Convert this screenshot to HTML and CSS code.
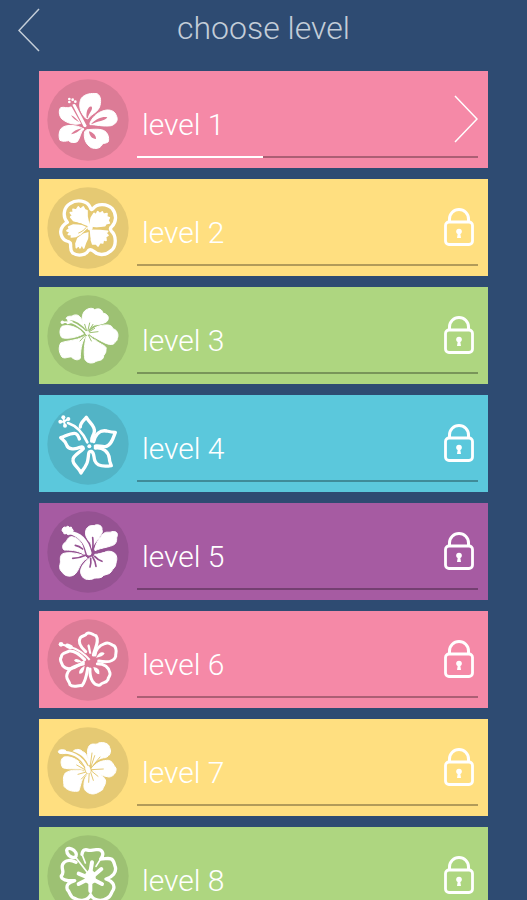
FILE: index.html
```html
<!DOCTYPE html>
<html lang="en">
<head>
    <meta charset="UTF-8">
    <meta name="viewport" content="width=device-width, initial-scale=1.0">
    <title>choose level</title>
    <link rel="stylesheet" href="styles.css">
</head>
<body>
    <svg class="sprite" aria-hidden="true">
        <symbol id="lock" viewBox="0 0 30 38">
            <rect x="1.5" y="14" width="27" height="22.5" rx="3.5" fill="none" stroke="currentColor" stroke-width="2.8"/>
            <path d="M5.500 14v-3a9.500 9.500 0 0 1 19 0v3" fill="none" stroke="currentColor" stroke-width="3"/>
            <circle cx="15" cy="23.5" r="2.8" fill="currentColor"/>
            <path d="M14 24h2l1 6h-4z" fill="currentColor"/>
        </symbol>
    </svg>

    <header class="topbar">
        <a class="back" href="#" aria-label="back">
            <svg width="22" height="44" viewBox="0 0 22 44"><path d="M21 1L1 22.500L21 43"/></svg>
        </a>
        <h1>choose level</h1>
    </header>

    <ul class="levels">
        <li>
            <button class="level pink" type="button">
                <svg class="flower bold" viewBox="21 20 246 246">
                    <circle class="disc" cx="144" cy="143" r="122"/>
                    <path d="M138 138C120 125 114 95 124 78C134 64 155 62 171 64C184 70 184 90 178 106C170 122 152 126 143 140Z"/>
                    <path d="M150 152C160 128 180 116 200 113C216 112 226 120 228 128C236 142 230 154 214 160C190 164 165 156 150 157Z"/>
                    <path d="M140 172C150 172 175 168 190 174C204 180 208 196 205 208C198 214 190 212 187 216C180 230 166 230 154 226C136 216 130 195 134 178Z"/>
                    <path d="M128 168C110 158 75 154 62 170C56 180 56 195 60 204C70 209 78 206 86 205C92 212 104 212 112 208C122 196 120 180 132 170Z"/>
                    <path d="M122 153C105 160 80 152 66 140C56 130 56 112 62 106C72 102 82 110 92 104C106 100 118 130 128 152Z"/>
                    <path class="shade" d="M140 136C137 118 146 98 155 103C160 112 147 120 143 138ZM154 154C168 139 190 131 202 135C196 146 172 146 154 156ZM147 177C160 181 169 190 168 200C156 200 148 190 147 177ZM126 168C110 171 99 177 93 186C106 185 117 176 126 168ZM118 150C110 140 102 132 93 129C98 138 108 144 118 150Z"/>
                    <path class="cut" stroke-width="16" d="M101 98L136 160"/>
                    <path stroke="none" d="M97 97Q104 92 107 98L140 160Q138 167 131 163Z"/>
                    <g stroke="none"><circle cx="88" cy="80" r="4"/><circle cx="98" cy="82" r="4"/><circle cx="88" cy="89" r="4"/><circle cx="106" cy="88" r="4"/></g>
                </svg>
                <span class="name">level 1</span>
                <svg class="mark" width="24" height="48" viewBox="0 0 24 48"><path class="line" d="M1 1L23 24L1 47"/></svg>
                <progress value="37" max="100" aria-label="level 1 progress"></progress>
            </button>
        </li>
        <li>
            <button class="level yellow" type="button" disabled>
                <svg class="flower bold" viewBox="21 20 246 246">
                    <circle class="disc" cx="144" cy="143" r="122"/>
                    <path class="outline" d="M82 126C66 108 72 80 90 70C110 56 142 60 151 82Q153 92 160 84C172 68 202 70 216 84C232 104 228 126 216 138Q208 144 214 152C230 166 230 200 212 212C194 228 172 224 160 212Q152 206 146 210C138 226 112 228 98 218C88 208 94 196 91 188Q88 184 80 182C64 176 56 152 68 138Q74 130 82 126Z"/>
                    <g stroke-width="5" stroke-linejoin="round">
                        <path d="M147 136L120 126L100 120L92 110L97 105L91 97L100 96L99 87L109 89L115 80L121 87L130 80L134 88L141 91L141 108Z"/>
                        <path d="M149 136L154 112L162 99L168 104L173 94L179 100L187 95L190 102L201 100L200 109L208 112L204 120L208 128L198 130L194 136L170 139Z"/>
                        <path d="M152 150L180 151L203 153L198 159L204 165L197 169L198 180L190 178L188 188L180 186L174 197L168 190L158 191L154 178Z"/>
                        <path d="M144 158L142 175L136 188L131 203L126 191L120 203L116 193L109 202L108 190L114 174L130 162Z"/>
                        <path d="M140 143L125 136L100 134L86 140L89 145L81 151L91 156L85 162L96 163L94 170L108 168L122 160Z"/>
                    </g>
                    <path class="cut" stroke-width="3" d="M138 142C134 148 126 154 116 158M108 127L126 132M156 144L196 143M147 160L150 176"/>
                    <circle cx="150" cy="142" r="7"/>
                </svg>
                <span class="name">level 2</span>
                <svg class="mark lock" width="30" height="38"><use href="#lock"/></svg>
                <progress value="0" max="100" aria-label="level 2 progress"></progress>
            </button>
        </li>
        <li>
            <button class="level green" type="button" disabled>
                <svg class="flower bold" viewBox="21 20 246 246">
                    <circle class="disc" cx="144" cy="143" r="122"/>
                    <path d="M140 130C124 112 122 82 134 68C146 58 158 58 164 64C176 58 188 64 188 74C200 76 208 84 204 94C202 104 180 108 164 110C152 114 148 122 144 132Z"/>
                    <path d="M146 134C158 118 180 108 205 110C216 112 216 116 220 122C232 124 237 140 232 150C232 160 224 160 222 166C205 176 180 154 148 139Z"/>
                    <path d="M141 142C150 142 160 150 172 160C190 172 202 174 198 184C199 198 190 196 190 208C184 220 172 214 164 222C150 227 140 222 135 214C130 190 134 165 139 144Z"/>
                    <path d="M135 142C115 157 80 156 62 164C54 180 58 194 66 206C76 213 84 204 94 206C102 214 114 218 121 210C121 190 124 165 135 146Z"/>
                    <path d="M132 136C110 114 85 108 66 114C58 122 58 140 66 148C90 154 115 143 132 138Z"/>
                    <path d="M134 124C118 112 92 102 78 90C84 80 94 86 98 82C110 76 120 82 125 94C126 104 129 114 134 124Z"/>
                    <path class="cut" stroke-width="3" d="M142 134L134 108M142 134L149 104M142 134L159 108M142 134L164 120M142 134L174 130M142 134L162 152M142 134L154 158M142 134L120 158M142 134L112 149"/>
                    <path class="cut" stroke-width="12" d="M80 102C100 96 124 114 138 134"/>
                    <path class="outline" stroke-width="5" d="M68 102L84 101C104 100 124 118 140 134M84 96L96 101M82 105L92 102"/>
                    <circle cx="67" cy="102" r="4"/><circle cx="142" cy="134" r="5"/>
                </svg>
                <span class="name">level 3</span>
                <svg class="mark lock" width="30" height="38"><use href="#lock"/></svg>
                <progress value="0" max="100" aria-label="level 3 progress"></progress>
            </button>
        </li>
        <li>
            <button class="level blue" type="button" disabled>
                <svg class="flower" viewBox="21 20 246 246">
                    <circle class="disc" cx="144" cy="143" r="122"/>
                    <g class="outline">
                        <path d="M121 92C120 80 132 72 139 63C148 80 166 88 163 106C161 118 154 122 155 134"/>
                        <path d="M161 136C166 114 180 100 200 104C212 107 220 108 226 108C220 124 214 148 196 151C184 152 174 147 166 149"/>
                        <path d="M166 155C190 152 206 168 208 186C208 196 212 202 214 208C195 211 172 212 165 194C160 182 164 170 154 165Q147 164 146 172C144 188 144 198 138 206C134 216 128 220 123 230C118 214 97 206 99 190C100 176 118 170 130 157Q130 150 120 153C106 160 84 160 80 146C76 134 68 130 62 124C76 120 98 106 108 112C116 116 116 122 118 128"/>
                        <path stroke-width="8" d="M84 80C108 88 128 108 142 138"/>
                        <path stroke-width="6" d="M72 76L70 64M72 76L84 68M72 76L61 76M72 76L75 87"/>
                    </g>
                    <circle cx="70" cy="63" r="6"/><circle cx="85" cy="68" r="6"/><circle cx="61" cy="76" r="6"/><circle cx="75" cy="88" r="6"/>
                    <circle cx="148" cy="150" r="6"/>
                </svg>
                <span class="name">level 4</span>
                <svg class="mark lock" width="30" height="38"><use href="#lock"/></svg>
                <progress value="0" max="100" aria-label="level 4 progress"></progress>
            </button>
        </li>
        <li>
            <button class="level purple" type="button" disabled>
                <svg class="flower bold" viewBox="21 20 246 246">
                    <circle class="disc" cx="144" cy="143" r="122"/>
                    <path d="M152 116C136 104 132 80 142 70C150 60 162 66 166 62C180 60 187 66 186 76C190 88 180 92 178 100C170 110 160 120 156 132Z"/>
                    <path d="M164 134C168 115 180 98 190 88C198 80 208 86 216 82C226 80 234 84 232 94C228 100 232 106 228 114C224 124 214 124 202 128C185 132 175 134 165 139Z"/>
                    <path d="M164 150C185 150 200 134 220 144C232 150 232 165 228 176C228 190 218 192 214 202C204 214 192 208 186 218C174 224 166 218 158 224C142 228 130 224 126 215C116 200 124 180 150 160Z"/>
                    <path d="M138 158C128 150 90 140 68 148C56 158 64 168 60 180C56 196 64 200 70 208C82 220 102 216 108 206C118 196 118 176 142 162Z"/>
                    <path d="M138 150C130 120 115 98 96 97C84 96 82 108 76 114C66 120 66 132 72 137C90 138 110 136 132 150Z"/>
                    <path class="cut" stroke-width="5" d="M106 123Q118 125 128 134M98 162Q118 162 138 152M150 188Q154 178 152 162M168 186Q167 172 158 158M186 171Q174 167 164 156M158 100Q160 114 158 138M194 140L170 144"/>
                    <circle class="shade" cx="154" cy="148" r="9"/>
                    <path class="cut" stroke-width="19" d="M98 86C130 92 138 114 144 144"/>
                    <path stroke="none" d="M88 79C122 82 146 104 155 146Q153 157 142 152C136 142 136 104 88 89Z"/>
                    <path d="M68 72Q72 66 78 69Q84 62 88 69Q96 66 96 73Q103 78 97 83Q98 91 90 89Q84 94 80 88Q70 91 70 84Q63 78 68 72Z"/>
                </svg>
                <span class="name">level 5</span>
                <svg class="mark lock" width="30" height="38"><use href="#lock"/></svg>
                <progress value="0" max="100" aria-label="level 5 progress"></progress>
            </button>
        </li>
        <li>
            <button class="level pink" type="button" disabled>
                <svg class="flower" viewBox="21 20 246 246">
                    <circle class="disc" cx="144" cy="143" r="122"/>
                    <g class="outline" stroke-width="9">
                        <path d="M137 118C122 104 112 90 121 76C128 68 136 72 140 64C150 56 158 68 168 70C180 86 164 108 160 128"/>
                        <path d="M165 128C168 108 182 98 194 94C206 86 214 98 222 100C234 112 226 122 227 132C222 148 200 151 176 146"/>
                        <path d="M172 154C190 154 206 162 210 182C212 192 204 194 204 202C198 214 188 208 180 218C162 222 148 200 150 170"/>
                        <path d="M143 168C140 185 138 205 126 220C114 218 100 228 90 217C88 206 80 204 80 192C82 170 100 160 130 155"/>
                        <path d="M130 150C108 166 82 178 68 160C66 150 56 144 64 134C64 120 80 122 88 116C106 114 122 130 134 142"/>
                        <path stroke-width="6" d="M64 96L88 103C116 110 134 124 152 146"/>
                    </g>
                    <path d="M142 100Q147 90 150 102L154 124H148ZM168 136Q182 112 194 123Q188 134 168 136ZM160 164Q182 166 178 186Q164 186 160 164ZM134 160Q132 186 118 184Q114 172 134 160ZM126 148Q106 154 102 144Q110 134 126 148Z"/>
                    <path class="shade" d="M144 150L149 142L158 136L160 145L170 149L162 153L158 162L152 157L143 160L147 154Z"/>
                    <circle cx="63" cy="96" r="7"/><ellipse cx="87" cy="102" rx="12" ry="7" transform="rotate(20 87 102)"/>
                </svg>
                <span class="name">level 6</span>
                <svg class="mark lock" width="30" height="38"><use href="#lock"/></svg>
                <progress value="0" max="100" aria-label="level 6 progress"></progress>
            </button>
        </li>
        <li>
            <button class="level yellow" type="button" disabled>
                <svg class="flower bold" viewBox="21 20 246 246">
                    <circle class="disc" cx="144" cy="143" r="122"/>
                    <path d="M152 132C140 110 140 86 148 76C158 66 168 76 176 68C190 64 208 70 209 82C216 96 208 108 196 112C180 112 165 122 156 138Z"/>
                    <path d="M156 144C170 124 190 120 205 120C218 122 220 134 228 144C230 158 218 170 206 170C185 168 170 154 156 149Z"/>
                    <path d="M152 154C170 150 190 167 196 178C200 190 190 198 188 208C178 214 166 224 152 220C138 216 130 208 132 192C132 175 142 162 148 156Z"/>
                    <path d="M138 156C120 146 90 148 76 158C66 172 72 184 72 198C84 214 105 214 116 212C124 195 122 172 142 160Z"/>
                    <path d="M138 148C120 120 95 106 72 110C60 116 62 132 68 142C90 150 115 140 136 150Z"/>
                    <path d="M98 94C106 84 122 86 128 94C138 96 144 112 150 132L144 136C132 112 116 100 98 94Z"/>
                    <path class="cut" stroke-width="3" d="M150 142L156 98M152 142L164 106M154 142L180 110M154 148L190 146M152 150L174 168M150 150L160 180M148 152L146 186M146 154L124 176M142 154L114 162M142 152L110 134M140 146L118 126"/>
                    <path class="cut" stroke-width="15" d="M78 98C104 99 132 110 144 152"/>
                    <path class="outline" stroke-width="8" d="M72 96C104 96 134 116 145 154"/>
                    <ellipse cx="67" cy="94" rx="12" ry="6"/><ellipse cx="144" cy="148" rx="6" ry="10" transform="rotate(-15 144 148)"/>
                </svg>
                <span class="name">level 7</span>
                <svg class="mark lock" width="30" height="38"><use href="#lock"/></svg>
                <progress value="0" max="100" aria-label="level 7 progress"></progress>
            </button>
        </li>
        <li>
            <button class="level green" type="button" disabled>
                <svg class="flower" viewBox="21 26 246 246">
                    <circle class="disc" cx="144" cy="149" r="122"/>
                    <path class="outline" d="M126 84C128 70 136 68 146 72C154 74 162 68 172 70C188 68 194 84 182 98C196 98 204 94 214 98C224 104 222 114 226 122C230 138 218 152 198 158C216 164 226 176 220 190C212 200 214 212 200 216C186 226 162 224 152 206C144 224 118 226 104 216C88 212 92 198 82 190C78 176 84 170 104 163C80 164 62 160 64 148C76 138 62 128 68 114C76 100 92 100 108 108"/>
                    <path class="outline" d="M104 94C90 94 80 84 80 72C82 62 94 66 102 72C110 80 112 88 104 94Z"/>
                    <path class="outline" stroke-width="5" d="M108 94L148 146M182 98L168 120M126 84L136 110M152 206V184"/>
                    <path class="outline" stroke-width="12" d="M156 108L152 132M184 128L163 146M186 173L164 162M116 173L138 162M116 142L136 150M151 194V170"/>
                    <path d="M136 142L150 126L166 140L168 166L151 176L134 166Z"/>
                </svg>
                <span class="name">level 8</span>
                <svg class="mark lock" width="30" height="38"><use href="#lock"/></svg>
                <progress value="0" max="100" aria-label="level 8 progress"></progress>
            </button>
        </li>
    </ul>
</body>
</html>
```
FILE: styles.css
```css
* {
    box-sizing: border-box;
}
body {
    margin: 0;
    height: 100vh;
    display: flex;
    flex-direction: column;
    background-color: #2e4b72;
    color: white;
    font-family: Roboto, "Liberation Sans", sans-serif;
    font-weight: 300;
}
.sprite {
    display: none;
}

/* top bar */
.topbar {
    flex: none;
    display: grid;
    grid-template-columns: 40px 1fr 40px;
    align-items: start;
    padding: 8px 0 15px;
    color: #c3cdd8;
}
.back {
    display: flex;
    height: 48px;
    padding-left: 18px;
    color: inherit;
}
.back path {
    fill: none;
    stroke: currentColor;
    stroke-width: 1.5;
}
.topbar h1 {
    margin: 0;
    font-size: 32px;
    font-weight: 300;
    line-height: 40px;
    text-align: center;
}

/* level list */
.levels {
    flex: 1;
    min-height: 0;
    margin: 0;
    padding: 0 39px;
    list-style: none;
    overflow-y: auto;
    scrollbar-width: none;
}
.levels li {
    margin-bottom: 11px;
}
.level {
    display: grid;
    grid-template-columns: 82px 1fr auto;
    grid-template-rows: 77px 2px;
    column-gap: 8px;
    width: 100%;
    height: 97px;
    padding: 8px 10px 8px 8px;
    border: none;
    color: white;
    font: inherit;
    text-align: left;
    cursor: pointer;
}
.level:disabled {
    cursor: default;
}
.pink {
    background-color: #f589a7;
    --shade: #dc7b96;
}
.yellow {
    background-color: #ffdf80;
    --shade: #e5c973;
}
.green {
    background-color: #aed680;
    --shade: #9dc173;
}
.blue {
    background-color: #5bc8dc;
    --shade: #52b4c6;
}
.purple {
    background-color: #a65ba2;
    --shade: #955292;
}
.name {
    align-self: end;
    padding-left: 5px;
    margin-bottom: 13px;
    font-size: 30px;
    line-height: 36px;
}
.mark {
    align-self: center;
    margin-top: 3px;
}
.mark .line {
    fill: none;
    stroke: currentColor;
    stroke-width: 1.5;
}
.lock {
    margin-right: 4px;
}
progress {
    grid-column: 2 / 4;
    width: 100%;
    height: 2px;
    border: none;
    background-color: rgba(0, 0, 0, 0.3);
    appearance: none;
}
progress::-webkit-progress-bar {
    background-color: transparent;
}
progress::-webkit-progress-value {
    background-color: white;
}
progress::-moz-progress-bar {
    background-color: white;
}

/* flower badges */
.flower {
    grid-row: 1 / 3;
    width: 82px;
    height: 82px;
    fill: white;
}
.bold {
    stroke: white;
    stroke-width: 3px;
}
.flower .disc,
.flower .shade {
    fill: var(--shade);
    stroke: none;
}
.flower .cut {
    fill: none;
    stroke: var(--shade);
    stroke-linecap: round;
}
.flower .outline {
    fill: none;
    stroke: white;
    stroke-linecap: round;
    stroke-linejoin: round;
}
.flower .outline:not([stroke-width]) {
    stroke-width: 10px;
}
```
